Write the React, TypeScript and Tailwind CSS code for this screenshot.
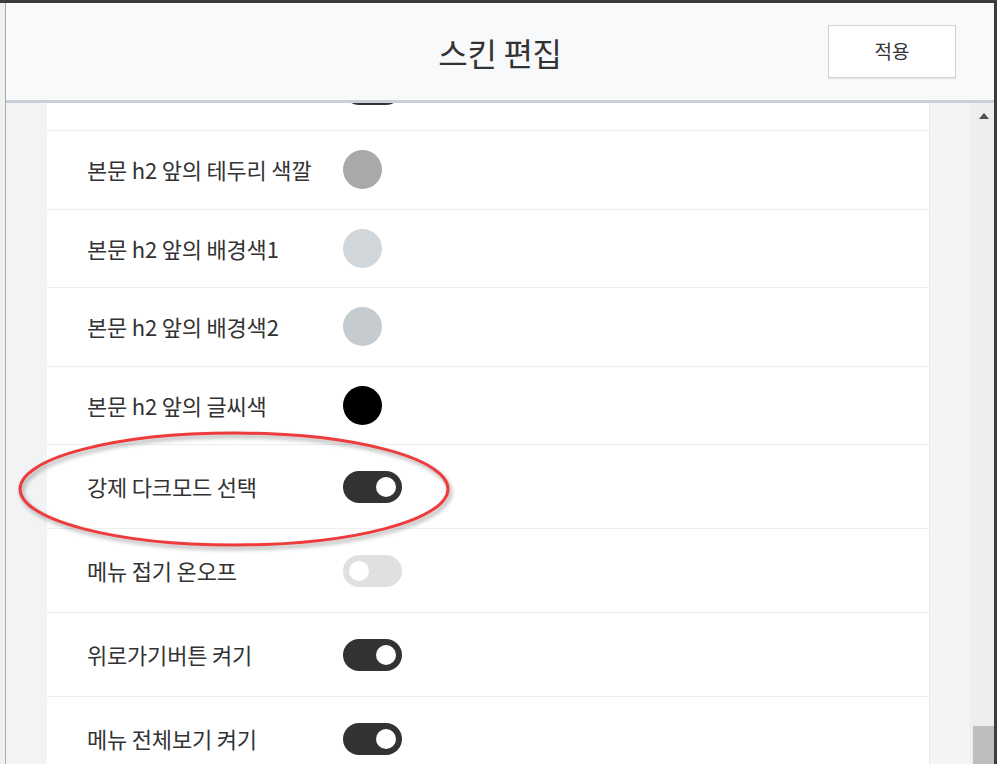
import { useState } from "react";

type Item =
  | { kind: "color"; label: string; color: string }
  | { kind: "toggle"; label: string; on: boolean };

// 첫 줄은 헤더 아래로 스크롤되어 스위치 끝만 보인다
const items: Item[] = [
  { kind: "toggle", label: "", on: true },
  { kind: "color", label: "본문 h2 앞의 테두리 색깔", color: "#a9a9a9" },
  { kind: "color", label: "본문 h2 앞의 배경색1", color: "#d1d6da" },
  { kind: "color", label: "본문 h2 앞의 배경색2", color: "#c6cbcf" },
  { kind: "color", label: "본문 h2 앞의 글씨색", color: "#000000" },
  { kind: "toggle", label: "강제 다크모드 선택", on: true },
  { kind: "toggle", label: "메뉴 접기 온오프", on: false },
  { kind: "toggle", label: "위로가기버튼 켜기", on: true },
  { kind: "toggle", label: "메뉴 전체보기 켜기", on: true },
];

function Toggle({ on, onClick }: { on: boolean; onClick: () => void }) {
  return (
    <button
      onClick={onClick}
      className={`flex items-center w-[59px] h-[32px] rounded-full px-[6px] ${
        on ? "bg-[#333333] justify-end" : "bg-[#e0e0e0] justify-start"
      }`}
    >
      <span className="block w-[20px] h-[20px] rounded-full bg-white" />
    </button>
  );
}

export default function App() {
  const [state, setState] = useState(items);

  const flip = (i: number) =>
    setState((prev) =>
      prev.map((it, idx) =>
        idx === i && it.kind === "toggle" ? { ...it, on: !it.on } : it
      )
    );

  return (
    <div
      className="relative w-[997px] h-[764px] flex flex-col overflow-hidden bg-white text-[#333]"
      style={{ fontFamily: '"Noto Sans CJK KR", "Noto Sans", sans-serif' }}
    >
      <div className="h-[3px] bg-[#3c3c3c] shrink-0" />

      <div className="flex flex-1 min-h-0">
        <div className="w-[6px] bg-[#f0f0f0] border-r border-[#a9a9a9] shrink-0" />

        <div className="flex flex-col flex-1 min-w-0">
          {/* 상단 헤더 */}
          <div className="h-[100px] shrink-0 grid grid-cols-[1fr_auto_1fr] items-center bg-[#f8f9fa] border-b-[3px] border-[#c9d0da]">
            <div />
            <h1 className="text-[32px] tracking-[-0.3px] leading-none">스킨 편집</h1>
            <div className="flex justify-end pr-[38px]">
              <button className="w-[128px] h-[53px] bg-white border border-[#d2d2d2] shadow-[0_1px_1px_rgba(0,0,0,0.08)] text-[19px]">
                적용
              </button>
            </div>
          </div>

          {/* 설정 목록 */}
          <div className="flex flex-1 min-h-0">
            <div className="w-[41px] bg-[#f1f3f5] shrink-0" />
            <div className="w-[883px] bg-white border-r border-[#e3e5eb] overflow-hidden shrink-0">
              <div className="-mt-[56px]">
                {state.map((it, i) => (
                  <div
                    key={i}
                    className={`flex items-center pl-[40px] border-b border-[#eeeeee] ${
                      it.kind === "toggle" ? "h-[84px]" : "h-[78.5px]"
                    }`}
                  >
                    <span className="w-[256px] text-[22px] tracking-[-0.2px]">{it.label}</span>
                    {it.kind === "color" ? (
                      <span
                        className="block w-[39px] h-[39px] rounded-full"
                        style={{ backgroundColor: it.color }}
                      />
                    ) : (
                      <Toggle on={it.on} onClick={() => flip(i)} />
                    )}
                  </div>
                ))}
              </div>
            </div>
            <div className="flex-1 bg-[#f3f4f6]" />
            <div className="w-[24px] bg-[#eeeeee] flex flex-col shrink-0">
              <div className="h-[26px] flex items-center justify-center pl-[4px]">
                <span className="w-0 h-0 border-l-[5px] border-r-[5px] border-b-[6px] border-l-transparent border-r-transparent border-b-[#505050]" />
              </div>
              <div className="flex-1" />
              <div className="h-[38px] ml-[3px] bg-[#bdbdbd]" />
            </div>
          </div>
        </div>

        <div className="w-[3px] bg-[#3c3c3c] shrink-0" />
      </div>

      {/* 빨간 강조 타원 */}
      <svg
        className="absolute left-0 top-0 pointer-events-none"
        width="997"
        height="764"
        style={{ filter: "drop-shadow(2px 3px 2px rgba(0,0,0,0.35))" }}
      >
        <ellipse cx="234" cy="489" rx="214" ry="56" fill="none" stroke="#ee3b3b" strokeWidth="3" />
      </svg>
    </div>
  );
}
